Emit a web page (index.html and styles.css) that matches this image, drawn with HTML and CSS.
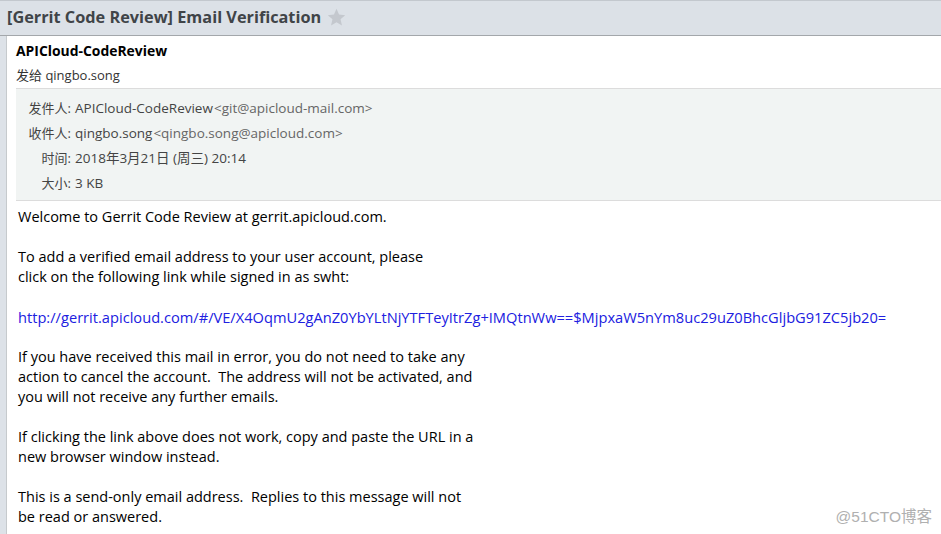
FILE: index.html
```html
<!DOCTYPE html>
<html>
<head>
<meta charset="utf-8">
<link rel="stylesheet" href="styles.css">
</head>
<body>
<div class="titlebar">
  <h1 class="subject">[Gerrit Code Review] Email Verification</h1>
  <svg class="star" width="19" height="19" viewBox="0 0 24 24"><path d="M12 1l3.2 7.3 7.8.7-5.9 5.2 1.8 7.8L12 17.9 5.1 22l1.8-7.8L1 9l7.8-.7z" fill="#c4c8ce"/></svg>
</div>
<div class="frame">
  <div class="panel">
    <div class="sender">APICloud-CodeReview</div>
    <div class="sendto">发给 qingbo.song</div>
    <div class="meta">
      <div class="row"><span class="lbl">发件人:</span><span class="val">APICloud-CodeReview<span class="addr">&lt;git@apicloud-mail.com&gt;</span></span></div>
      <div class="row"><span class="lbl">收件人:</span><span class="val">qingbo.song<span class="addr">&lt;qingbo.song@apicloud.com&gt;</span></span></div>
      <div class="row"><span class="lbl">时间:</span><span class="val">2018年3月21日 (周三) 20:14</span></div>
      <div class="row"><span class="lbl">大小:</span><span class="val">3 KB</span></div>
    </div>
    <div class="body">
      <p>Welcome to Gerrit Code Review at gerrit.apicloud.com.</p>
      <p>To add a verified email address to your user account, please<br>click on the following link while signed in as swht:</p>
      <p class="linkline"><a class="link" href="#">http://gerrit.apicloud.com/#/VE/X4OqmU2gAnZ0YbYLtNjYTFTeyItrZg+IMQtnWw==$MjpxaW5nYm8uc29uZ0BhcGljbG91ZC5jb20=</a></p>
      <p>If you have received this mail in error, you do not need to take any<br>action to cancel the account.&nbsp; The address will not be activated, and<br>you will not receive any further emails.</p>
      <p>If clicking the link above does not work, copy and paste the URL in a<br>new browser window instead.</p>
      <p>This is a send-only email address.&nbsp; Replies to this message will not<br>be read or answered.</p>
    </div>
  </div>
</div>
<div class="watermark">@51CTO博客</div>
</body>
</html>
```
FILE: styles.css
```css
html, body {
  margin: 0;
  padding: 0;
  height: 534px;
  overflow: hidden;
  background: #dde2e8;
  font-family: "Open Sans", "Noto Sans CJK SC", sans-serif;
}
.titlebar {
  height: 34px;
  border-top: 1px solid #c3c8ce;
  border-bottom: 1px solid #a3a7ab;
  background: #dce1e7;
  display: flex;
  align-items: center;
  padding-left: 7px;
  gap: 6px;
}
.subject {
  margin: 0 0 2px 0;
  font-size: 16.3px;
  font-weight: bold;
  color: #404448;
}
.star { margin-top: -2px; }
.frame {
  padding-left: 6px;
}
.panel {
  background: #fff;
  border-left: 1px solid #c6cacd;
  padding-top: 5px;
  height: 500px;
}
.sender {
  font-size: 13.9px;
  font-weight: bold;
  color: #000;
  padding-left: 9px;
  line-height: 20px;
}
.sendto {
  font-size: 13px;
  color: #333;
  padding-left: 9px;
  line-height: 20px;
  margin-top: 4px;
}
.meta {
  margin-top: 3px;
  margin-left: 9px;
  background: #f1f4f3;
  border-top: 1px solid #dcdcdc;
  border-bottom: 1px solid #dcdcdc;
  padding: 7px 0 4px 0;
  font-size: 13.5px;
  color: #444;
}
.row {
  display: flex;
  line-height: 25px;
}
.lbl {
  width: 55px;
  text-align: right;
  flex: none;
  font-size: 13px;
}
.val { padding-left: 4px; }
.addr { color: #666; margin-left: 1px; }
.body {
  padding: 6px 0 0 11px;
  font-size: 14.5px;
  line-height: 20px;
  color: #000;
}
.body p { margin: 0 0 20px 0; }
.body .linkline { font-size: 14.65px; }
.link {
  color: #2020e0;
  text-decoration: none;
}
.watermark {
  position: absolute;
  right: 9px;
  bottom: 8px;
  font-size: 15.5px;
  color: #b0b0b0;
  font-family: "Liberation Sans", "Noto Sans CJK SC", sans-serif;
}
```
